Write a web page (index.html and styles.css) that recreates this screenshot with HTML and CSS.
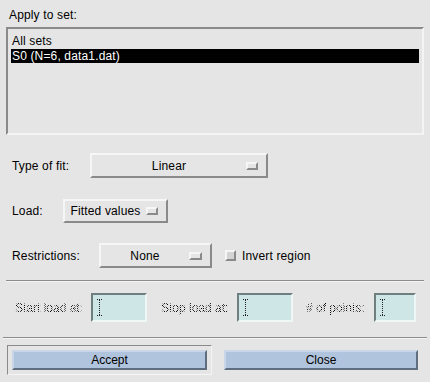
FILE: index.html
```html
<!DOCTYPE html>
<html lang="en">
<head>
  <meta charset="UTF-8">
  <title>Load and evaluate</title>
  <link rel="stylesheet" href="styles.css">
</head>
<body>
  <div class="dialog">
    <div class="title">Apply to set:</div>

    <!-- SET LIST -->
    <div class="setlist">
      <div class="set-item">All sets</div>
      <div class="set-item selected">S0 (N=6, data1.dat)</div>
    </div>

    <!-- OPTIONS -->
    <div class="row row-fit">
      <span class="row-label label-fit">Type of fit:</span>
      <div class="optmenu opt-fit"><span class="opt-text">Linear</span><span class="indicator"></span></div>
    </div>

    <div class="row row-load">
      <span class="row-label label-load">Load:</span>
      <div class="optmenu opt-load"><span class="opt-text">Fitted values</span><span class="indicator"></span></div>
    </div>

    <div class="row row-restr">
      <span class="row-label label-restr">Restrictions:</span>
      <div class="optmenu opt-restr"><span class="opt-text">None</span><span class="indicator"></span></div>
      <span class="checkbox"></span>
      <span class="check-label">Invert region</span>
    </div>

    <div class="separator sep-a"></div>

    <!-- INSENSITIVE FIELDS -->
    <div class="fields">
      <span class="fld-label fl-start">Start load at:</span>
      <div class="textfield tf-start"><svg class="ibeam" width="5" height="17" viewBox="0 0 5 17"><path d="M0 0.5h5M0 16.5h5" stroke="#222" stroke-dasharray="1 1"/><path d="M2.5 1v15" stroke="#222" stroke-dasharray="1 1"/></svg></div>
      <span class="fld-label fl-stop">Stop load at:</span>
      <div class="textfield tf-stop"><svg class="ibeam" width="5" height="17" viewBox="0 0 5 17"><path d="M0 0.5h5M0 16.5h5" stroke="#222" stroke-dasharray="1 1"/><path d="M2.5 1v15" stroke="#222" stroke-dasharray="1 1"/></svg></div>
      <span class="fld-label fl-points"># of points:</span>
      <div class="textfield tf-points"><svg class="ibeam" width="5" height="17" viewBox="0 0 5 17"><path d="M0 0.5h5M0 16.5h5" stroke="#222" stroke-dasharray="1 1"/><path d="M2.5 1v15" stroke="#222" stroke-dasharray="1 1"/></svg></div>
    </div>

    <div class="separator sep-b"></div>

    <!-- ACTION BUTTONS -->
    <div class="actions">
      <div class="default-frame"><button class="push">Accept</button></div>
      <button class="push push-close">Close</button>
    </div>
  </div>
</body>
</html>
```

FILE: styles.css
```css
* { margin: 0; padding: 0; box-sizing: border-box; }
body {
  background: #e5e5e5; color: #000;
  font-family: "Liberation Sans", Arial, sans-serif; font-size: 12px; line-height: 14px;
  letter-spacing: 0.15px;
  width: 430px; height: 382px; overflow: hidden;
}

.dialog { padding-top: 8px; }
.title { height: 14px; margin-left: 9px; }

/* SET LIST */
.setlist {
  margin: 5px 6px 0; height: 108px;
  border: 2px solid; border-color: #8a8a8a #f4f4f4 #f4f4f4 #8a8a8a;
  padding: 5px 3px 0;
}
.set-item { height: 14px; padding-left: 1px; }
.set-item:first-child { height: 15px; }
.set-item.selected { background: #000; color: #fff; }

/* OPTION ROWS */
.row { display: flex; align-items: center; padding-left: 12px; }
.row-fit { margin-top: 18px; height: 25px; }
.row-load { margin-top: 21px; height: 24px; }
.row-restr { margin-top: 20px; height: 25px; }
.label-fit { width: 78px; }
.label-load { width: 51px; }
.label-restr { width: 87px; }

.optmenu {
  display: flex; align-items: center; height: 100%;
  border: 2px solid; border-color: #f6f6f6 #8a8a8a #8a8a8a #f6f6f6;
}
.opt-fit { width: 178px; }
.opt-load { width: 105px; }
.opt-restr { width: 113px; }
.opt-text { flex: 1; text-align: center; }
.indicator {
  width: 12px; height: 8px; margin-right: 8px;
  border: 2px solid; border-color: #f6f6f6 #8a8a8a #8a8a8a #f6f6f6;
}
.opt-restr .indicator { width: 13px; }

.checkbox {
  width: 11px; height: 11px; margin-left: 13px; margin-right: 6px;
  background: #d4d4d4;
  border: 2px solid; border-color: #f6f6f6 #8a8a8a #8a8a8a #f6f6f6;
}

/* SEPARATORS */
.separator { height: 2px; border-top: 1px solid #8c8c8c; border-bottom: 1px solid #f4f4f4; }
.sep-a { margin: 12px 6px 0; }
.sep-b { margin: 15px 3px 0; }

/* FIELDS */
.fields { display: flex; align-items: center; height: 29px; margin-top: 11px; }
.fld-label {
  background: repeating-conic-gradient(#000 0 25%, transparent 0 50%) 0 0 / 2px 2px;
  -webkit-background-clip: text; background-clip: text; color: transparent;
  letter-spacing: 0;
}
.fl-start { margin-left: 15px; width: 76px; }
.fl-stop { margin-left: 14px; width: 76px; }
.fl-points { margin-left: 13px; width: 68px; }
.textfield {
  height: 29px; background: #cfe6e6;
  border: 2px solid; border-color: #6f7f7f #eef6f6 #eef6f6 #6f7f7f;
  padding: 4px 0 0 4px;
}
.ibeam { display: block; }
.tf-start, .tf-stop { width: 56px; }
.tf-points { width: 42px; }

/* BUTTONS */
.actions { display: flex; align-items: center; margin-top: 6px; height: 30px; }
.default-frame {
  margin-left: 7px; width: 205px; height: 30px; padding: 4px;
  border: 1px solid; border-color: #8a8a8a #f4f4f4 #f4f4f4 #8a8a8a;
}
.push {
  display: block; width: 195px; height: 20px;
  font: inherit; color: #000; background: #b0c4de;
  border: 2px solid; border-color: #c9d6e8 #5f6e7e #5f6e7e #c9d6e8;
}
.push-close { margin-left: 12px; width: 194px; }
```
